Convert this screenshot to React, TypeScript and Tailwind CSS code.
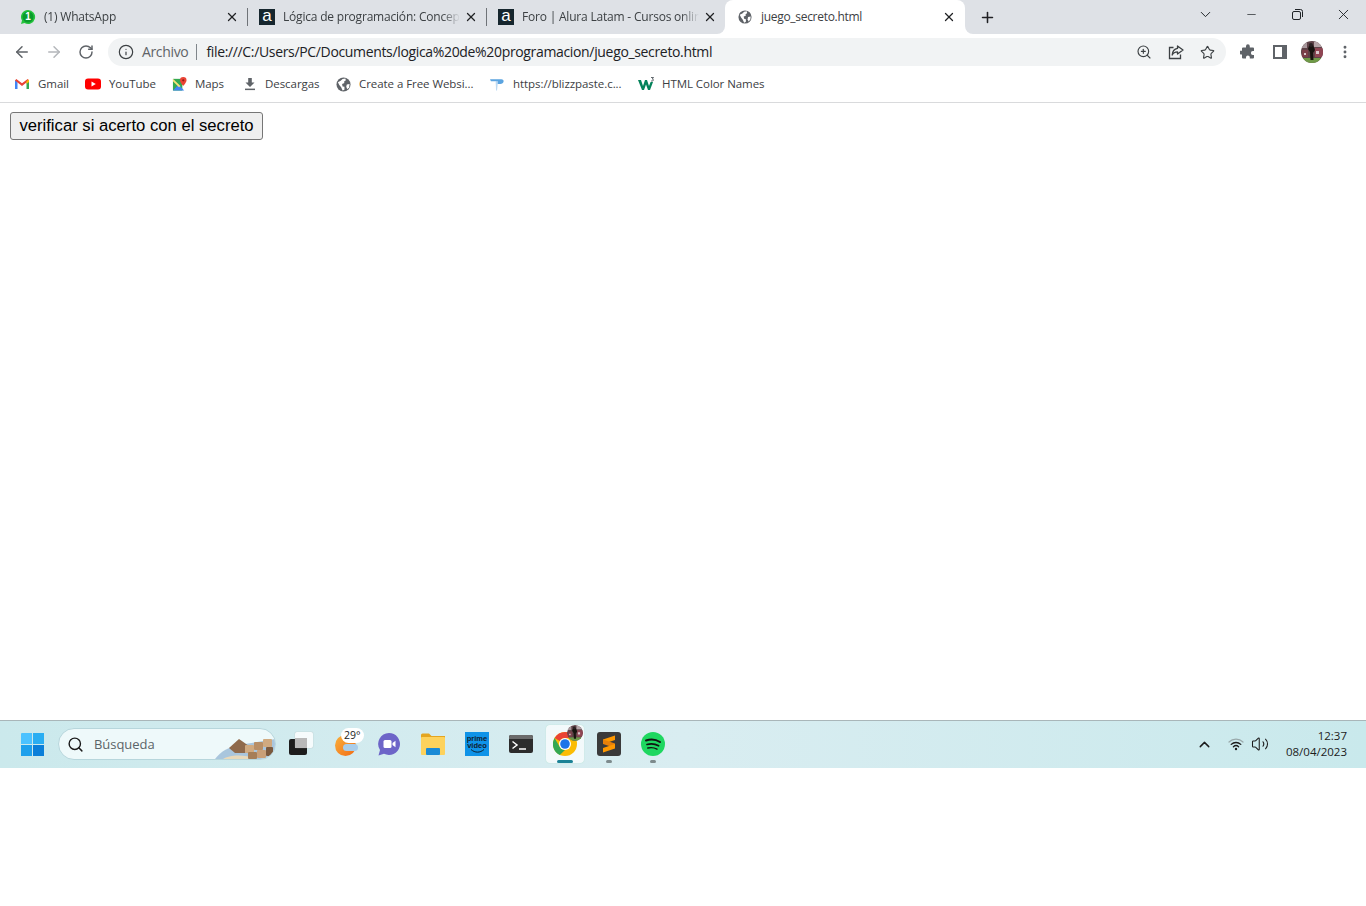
import React from "react";
import { ArrowLeft, ArrowRight, RotateCw, Info, ZoomIn, Star, Plus, X, ChevronDown, ChevronUp, Minus, Search, MoreVertical, Volume2 } from "lucide-react";

const uiFont = "font-['Open_Sans',sans-serif]";

const Globe = ({ size = 14 }: { size?: number }) => (
  <svg width={size} height={size} viewBox="0 0 16 16" className="shrink-0">
    <circle cx="8" cy="8" r="7.5" fill="#5f6368" />
    <path d="M2 5.5 L5 4 L7 2 L10 1.5 L10.5 3.5 L8.5 5 L9 6.5 L6.5 7.5 L7 10 L9 10.5 L9 13.5 L7 14.5 L5.5 11 L3.5 8.5 Z" fill="#fff" />
    <path d="M11.5 8 L14.5 7.5 L14 11 L12 13 L11 10.5 Z" fill="#fff" />
  </svg>
);

const AluraIcon = () => (
  <div className="w-4 h-4 shrink-0 bg-[#16262e] flex items-center justify-center">
    <span className="text-white text-[17px] leading-[16px] font-['Liberation_Sans',sans-serif] -mt-[2px]">a</span>
  </div>
);

const WhatsAppIcon = () => (
  <div className="relative w-4 h-4 shrink-0">
    <svg width="16" height="16" viewBox="0 0 16 16" className="absolute inset-0">
      <path d="M8 1a7 7 0 0 0-6 10.6L1 15l3.5-1A7 7 0 1 0 8 1z" fill="#25c33d" />
      <circle cx="8" cy="8" r="5.5" fill="#0a9c2c" />
    </svg>
    <span className="absolute inset-0 flex items-center justify-center text-white text-[10px] font-bold leading-none font-['Liberation_Sans',sans-serif]">1</span>
  </div>
);

const tabs = [
  { title: "(1) WhatsApp", icon: <WhatsAppIcon /> },
  { title: "Lógica de programación: Concep", icon: <AluraIcon /> },
  { title: "Foro | Alura Latam - Cursos onlin", icon: <AluraIcon /> },
];

const GmailIcon = () => (
  <svg width="16" height="16" viewBox="0 0 16 16" className="shrink-0">
    <path d="M1 13V4l2.5 1v8z" fill="#4285f4" />
    <path d="M15 13V4l-2.5 1v8z" fill="#34a853" />
    <path d="M1 4.5 L2.3 3 L8 7.3 L13.7 3 L15 4.5 L8 10z" fill="#ea4335" />
    <path d="M12.5 5 L15 3.6 V6 L12.5 8z" fill="#fbbc04" />
  </svg>
);

const YouTubeIcon = () => (
  <svg width="16" height="16" viewBox="0 0 16 16" className="shrink-0">
    <rect x="0" y="2.5" width="16" height="11" rx="3" fill="#f00" />
    <path d="M6.5 5.5 L10.8 8 L6.5 10.5z" fill="#fff" />
  </svg>
);

const MapsIcon = () => (
  <svg width="15" height="16" viewBox="0 0 16 16" className="shrink-0">
    <path d="M1 2.5 H11 V15 H1z" fill="#34a853" />
    <path d="M1 15 L7 8.5 L13 15z" fill="#4285f4" />
    <path d="M1 2.5 L9 10 L7.5 11.5 L1 5z" fill="#fbe27a" />
    <path d="M12 0.5a3.5 3.5 0 0 0-3.5 3.5c0 2.4 3.5 6 3.5 6s3.5-3.6 3.5-6A3.5 3.5 0 0 0 12 .5z" fill="#ea4335" />
    <circle cx="12" cy="4" r="1.2" fill="#8f1d16" />
  </svg>
);

const DownloadIcon = () => (
  <svg width="14" height="16" viewBox="0 0 14 16" className="shrink-0">
    <path d="M5.2 2 H8.8 V6.5 H11.5 L7 11 L2.5 6.5 H5.2z" fill="#5f6368" />
    <rect x="2" y="12.6" width="10" height="1.5" fill="#5f6368" />
  </svg>
);

const BlizzIcon = () => (
  <svg width="15" height="16" viewBox="0 0 16 16" className="shrink-0">
    <path d="M0 3 H12 C16 3 15 8 11 8 H8 L6.5 5 H1z" fill="#5ba4e0" />
    <path d="M6 5 L8.5 5 L7.5 15 L6.5 15z" fill="#bcd9f2" />
  </svg>
);

const W3Icon = () => (
  <div className="relative w-4 h-4 shrink-0">
    <svg width="16" height="16" viewBox="0 0 16 16">
      <path d="M0 4 H3 L5 10 L7 4 H9 L11 10 L12.6 6 H15 L12 14 H10 L8 8.5 L6 14 H4z" fill="#04825a" />
      <path d="M13 1.5 H15.5 L14.3 3 C15.8 3 15.8 5 14.3 5 H13" stroke="#1f2a30" strokeWidth="0.7" fill="none" />
    </svg>
  </div>
);

const bookmarks = [
  { label: "Gmail", icon: <GmailIcon />, w: "w-[31px]" },
  { label: "YouTube", icon: <YouTubeIcon />, w: "w-[47px]" },
  { label: "Maps", icon: <MapsIcon />, w: "w-[32px]" },
  { label: "Descargas", icon: <DownloadIcon />, w: "w-[55px]" },
  { label: "Create a Free Websi...", icon: <Globe size={15} />, w: "w-[115px]" },
  { label: "https://blizzpaste.c...", icon: <BlizzIcon />, w: "w-[109px]" },
  { label: "HTML Color Names", icon: <W3Icon />, w: "w-[104px]" },
];

const ProfilePic = ({ size = 22 }: { size?: number }) => (
  <svg width={size} height={size} viewBox="0 0 22 22">
    <defs>
      <clipPath id={`pc${size}`}>
        <circle cx="11" cy="11" r="11" />
      </clipPath>
    </defs>
    <g clipPath={`url(#pc${size})`}>
      <rect width="22" height="22" fill="#5e4248" />
      <rect x="0" y="2" width="6" height="5" fill="#a8989c" />
      <rect x="13" y="1" width="9" height="5" fill="#b5a5a8" />
      <rect x="1" y="9" width="6" height="7" fill="#7b3f4a" />
      <rect x="14" y="7" width="8" height="9" fill="#8f4553" />
      <rect x="15" y="10" width="3" height="3" fill="#d8c8cc" />
      <rect x="3" y="12" width="2" height="2" fill="#d8c8cc" />
      <rect x="0" y="17" width="22" height="5" fill="#6f9a48" />
      <path d="M8 5 L12 4 L14 9 L12 12 L12.5 19 L9.5 19 L9 11 L7 8z" fill="#17130f" />
      <circle cx="10" cy="4" r="2" fill="#2a2023" />
    </g>
  </svg>
);

const ShareIcon = () => (
  <svg width="16" height="16" viewBox="0 0 16 16" fill="none" stroke="#3c4043" strokeWidth="1.3">
    <path d="M5.5 3.5 H1.5 V14.5 H12.5 V10.5" />
    <path d="M9.5 2 L15 6 L9.5 10 V7.8 C7 7.8 5.2 8.8 4.2 11 C4.4 7.6 6.3 5 9.5 4.4z" strokeLinejoin="round" />
  </svg>
);

const PuzzleIcon = () => (
  <svg width="16" height="16" viewBox="0 0 16 16" fill="#5f6368">
    <path d="M6 2.2a1.9 1.9 0 0 1 3.8 0V3.5h3.2a1 1 0 0 1 1 1v2.6h-1.2a1.9 1.9 0 0 0 0 3.8H14v2.6a1 1 0 0 1-1 1H9.8v-1.2a1.9 1.9 0 0 0-3.8 0v1.2H3a1 1 0 0 1-1-1V10.5H.9a1.9 1.9 0 0 1 0-3.8H2V4.5a1 1 0 0 1 1-1h3z" />
  </svg>
);

const SidePanelIcon = () => (
  <div className="w-[14px] h-[14px] bg-[#5f6368] flex items-stretch p-[2px] pr-[5px] box-border">
    <div className="flex-1 bg-white" />
  </div>
);

const RestoreIcon = () => (
  <svg width="11" height="11" viewBox="0 0 11 11" fill="none" stroke="#1f2327" strokeWidth="1">
    <rect x="0.5" y="2.5" width="8" height="8" rx="1.5" />
    <path d="M3 0.5 H8.5 A2 2 0 0 1 10.5 2.5 V8" />
  </svg>
);

const WindowsLogo = () => (
  <div className="grid grid-cols-2 grid-rows-2 gap-[1px] w-[23px] h-[23px]">
    <div className="bg-[#4cc2ff] rounded-tl-[1px]" />
    <div className="bg-[#2aaef2]" />
    <div className="bg-[#1ea0ec]" />
    <div className="bg-[#0a7fd9]" />
  </div>
);

const SearchArt = () => (
  <svg width="60" height="32" viewBox="0 0 60 32" className="absolute right-0 top-0">
    <path d="M0 30 C6 22 14 18 24 16 L60 10 V30z" fill="#a9c6dd" />
    <path d="M8 30 C14 26 30 25 40 30z" fill="#e8d9ba" />
    <path d="M14 19 L24 10 L34 17 L30 24 L20 24z" fill="#8f6a4c" />
    <rect x="30" y="16" width="9" height="8" rx="1" fill="#d0aa80" />
    <rect x="39" y="13" width="9" height="8" rx="1" fill="#b88f66" />
    <rect x="48" y="10" width="9" height="8" rx="1" fill="#d0aa80" />
    <rect x="33" y="23" width="9" height="7" rx="1" fill="#a67e57" />
    <rect x="42" y="21" width="9" height="8" rx="1" fill="#c9a078" />
    <rect x="51" y="18" width="7" height="9" rx="1" fill="#7b5a3e" />
  </svg>
);

const TaskViewIcon = () => (
  <div className="relative w-[24px] h-[24px]">
    <div className="absolute left-0 bottom-[1px] w-[18px] h-[16px] bg-[#1d1d1d] rounded-[2px]" />
    <div className="absolute right-0 top-0 w-[18px] h-[16px] bg-white/80 rounded-[2px] shadow-[0_0_1px_#999]" />
    <div className="absolute left-[6px] top-[6px] w-[12px] h-[10px] bg-[#b9b9b9]" />
  </div>
);

const WeatherIcon = () => (
  <div className="relative w-[24px] h-[24px] left-[2px]">
    <div className="absolute left-0 top-[3px] w-[21px] h-[21px] rounded-full bg-gradient-to-br from-[#f9b13c] to-[#f06a12]" />
    <div className="absolute left-[8px] top-[12px] w-[15px] h-[7px] rounded-full bg-[#a9cdea]" />
    <div className="absolute left-[6px] -top-[4px] h-[15px] px-[3px] rounded-full bg-white flex items-center">
      <span className={`${uiFont} text-[10.5px] leading-none text-[#222]`}>29°</span>
    </div>
  </div>
);

const MeetIcon = () => (
  <svg width="24" height="24" viewBox="0 0 24 24">
    <path d="M12 1a11 11 0 1 1-5 20.8L1.5 23.5 3 18A11 11 0 0 1 12 1z" fill="#6d65c8" />
    <rect x="6.5" y="8" width="8" height="8" rx="1.5" fill="#fff" />
    <path d="M15.5 11 L18.5 8.8 V15.2 L15.5 13z" fill="#fff" />
  </svg>
);

const FolderIcon = () => (
  <svg width="24" height="22" viewBox="0 0 24 22">
    <path d="M0 2 a1.5 1.5 0 0 1 1.5-1.5 H8 L10.5 3 H24 V8 H0z" fill="#e4a520" />
    <rect x="0" y="4" width="24" height="18" rx="1" fill="#fdd25c" />
    <rect x="5" y="15" width="14" height="7" rx="1" fill="#1a8ad6" />
  </svg>
);

const PrimeIcon = () => (
  <div className="w-[24px] h-[24px] bg-[#0f93e8] flex flex-col items-center justify-center">
    <span className="font-['Liberation_Sans',sans-serif] font-bold text-[7.5px] leading-[7px] text-[#10202e]">prime</span>
    <span className="font-['Liberation_Sans',sans-serif] font-bold text-[7.5px] leading-[7px] text-[#10202e]">video</span>
    <svg width="15" height="4" viewBox="0 0 15 4">
      <path d="M1 0.5 C5 4 10 4 14 0.5" stroke="#10202e" strokeWidth="1" fill="none" />
    </svg>
  </div>
);

const TerminalIcon = () => (
  <div className="w-[24px] h-[18px] rounded-[2px] bg-[#2c2c2c] overflow-hidden relative">
    <div className="h-[4px] bg-[#6b6b6b]" />
    <svg width="24" height="14" viewBox="0 0 24 14" className="absolute left-0 top-[4px]">
      <path d="M3.5 2.5 L8 6 L3.5 9.5" stroke="#fff" strokeWidth="1.5" fill="none" />
      <path d="M10 10 H17" stroke="#fff" strokeWidth="1.5" />
    </svg>
  </div>
);

const ChromeIcon = () => (
  <svg width="24" height="24" viewBox="0 0 24 24">
    <circle cx="12" cy="12" r="12" fill="#fbbc04" />
    <path d="M12 0 A12 12 0 0 1 22.4 6 H12 A6 6 0 0 0 6.8 9 L1.6 6 A12 12 0 0 1 12 0z" fill="#ea4335" />
    <path d="M1.6 6 L6.8 15 A6 6 0 0 0 12 18 L6.8 23 A12 12 0 0 1 1.6 6z" fill="#34a853" />
    <circle cx="12" cy="12" r="6" fill="#fff" />
    <circle cx="12" cy="12" r="4.8" fill="#1a73e8" />
  </svg>
);

const SublimeIcon = () => (
  <div className="w-[24px] h-[24px] rounded-[3px] bg-[#3a3a3a] flex items-center justify-center">
    <svg width="14" height="18" viewBox="0 0 14 18">
      <path d="M13 0.5 V5 L1 9 V4.5z" fill="#ff9800" />
      <path d="M1 9 L13 13 V8.5 L1 4.5z" fill="#e8800a" />
      <path d="M13 9 V13.5 L1 17.5 V13z" fill="#ff9800" />
    </svg>
  </div>
);

const SpotifyIcon = () => (
  <svg width="24" height="24" viewBox="0 0 24 24">
    <circle cx="12" cy="12" r="12" fill="#1ed760" />
    <path d="M5 8.5 C10 7 15 7.5 19 10" stroke="#111" strokeWidth="2" fill="none" strokeLinecap="round" />
    <path d="M6 12.5 C10 11.4 14 11.8 17.6 13.8" stroke="#111" strokeWidth="1.7" fill="none" strokeLinecap="round" />
    <path d="M6.8 16 C10 15.3 13.3 15.6 16 17.2" stroke="#111" strokeWidth="1.4" fill="none" strokeLinecap="round" />
  </svg>
);

const WifiIcon = () => (
  <svg width="16" height="14" viewBox="0 0 16 14" fill="none" strokeLinecap="round">
    <path d="M1 5 A10 10 0 0 1 15 5" stroke="#9aa9ab" strokeWidth="1.2" />
    <path d="M3.2 7.4 A7 7 0 0 1 12.8 7.4" stroke="#1c1c1c" strokeWidth="1.3" />
    <path d="M5.4 9.7 A3.8 3.8 0 0 1 10.6 9.7" stroke="#1c1c1c" strokeWidth="1.3" />
    <circle cx="8" cy="12" r="1.2" fill="#1c1c1c" />
  </svg>
);

const TaskItem = ({
  children,
  active,
  running,
}: {
  children: React.ReactNode;
  active?: boolean;
  running?: boolean;
}) => (
  <div className={`relative w-[38px] h-[38px] mx-[3px] rounded-[4px] flex items-center justify-center ${active ? "bg-white/70 shadow-[0_0_1px_#9db]" : ""}`}>
    {children}
    {active && <div className="absolute bottom-[0px] left-[11px] w-[16px] h-[3px] rounded-full bg-[#1b8296]" />}
    {running && <div className="absolute bottom-[0px] left-[16px] w-[6px] h-[3px] rounded-full bg-[#7d8a8c]" />}
  </div>
);

const Tab = ({ title, icon, divider }: { title: string; icon: React.ReactNode; divider: boolean }) => (
  <div className="relative w-[239px] h-[34px] flex items-center pl-[11px] pr-[9px] shrink-0">
    {icon}
    <div className="ml-[8px] flex-1 min-w-0 whitespace-nowrap text-[12px] tracking-[-0.2px] text-[#3c4043] [mask-image:linear-gradient(to_right,black_90%,transparent)]">
      {title}
    </div>
    <X size={14} strokeWidth={2.2} className="ml-[4px] shrink-0 text-[#202124]" />
    {divider && <div className="absolute right-0 top-[8px] h-[18px] w-px bg-[#6f7378]" />}
  </div>
);

export default function App() {
  return (
    <div className={`${uiFont} min-h-[906px] bg-white flex flex-col`}>
      {/* barra de pestañas */}
      <div className="h-[34px] bg-[#dee1e6] flex items-stretch pl-[9px]">
        {tabs.map((t, i) => (
          <Tab key={t.title} title={t.title} icon={t.icon} divider={i < 2} />
        ))}
        <div className="relative w-[240px] h-[34px] -ml-[1px] bg-white rounded-t-[8px] flex items-center pl-[13px] pr-[9px] shrink-0">
          <Globe />
          <span className="ml-[9px] flex-1 text-[12px] tracking-[-0.3px] text-[#3c4043] whitespace-nowrap">juego_secreto.html</span>
          <X size={14} strokeWidth={2.2} className="text-[#202124]" />
          <div className="absolute -left-[8px] bottom-0 w-[8px] h-[8px] bg-white">
            <div className="w-full h-full bg-[#dee1e6] rounded-br-[8px]" />
          </div>
          <div className="absolute -right-[8px] bottom-0 w-[8px] h-[8px] bg-white">
            <div className="w-full h-full bg-[#dee1e6] rounded-bl-[8px]" />
          </div>
        </div>
        <div className="ml-[14px] h-[34px] flex items-center">
          <Plus size={17} strokeWidth={2.2} className="text-[#202124]" />
        </div>
        <div className="ml-auto flex items-start">
          <div className="w-[46px] h-[29px] flex items-center justify-center">
            <ChevronDown size={17} strokeWidth={1.4} className="text-[#1f2327]" />
          </div>
          <div className="w-[46px] h-[29px] flex items-center justify-center">
            <Minus size={13} strokeWidth={1.3} className="text-[#1f2327]" />
          </div>
          <div className="w-[46px] h-[29px] flex items-center justify-center">
            <RestoreIcon />
          </div>
          <div className="w-[46px] h-[29px] flex items-center justify-center">
            <X size={17} strokeWidth={1.3} className="text-[#1f2327]" />
          </div>
        </div>
      </div>

      {/* barra de direcciones */}
      <div className="h-[36px] flex items-center pl-[13px] pr-[13px]">
        <ArrowLeft size={18} strokeWidth={2} className="text-[#5f6368]" />
        <ArrowRight size={18} strokeWidth={2} className="ml-[14px] text-[#b4b7bb]" />
        <RotateCw size={16} strokeWidth={2.2} className="ml-[15px] text-[#5f6368]" />
        <div className="ml-[14px] w-[1118px] h-[28px] rounded-full bg-[#f1f3f4] flex items-center pl-[10px] pr-[11px]">
          <Info size={16} strokeWidth={1.8} className="text-[#3c4043]" />
          <span className="ml-[8px] pb-[2px] text-[14px] text-[#5f6368] tracking-[-0.35px]">Archivo</span>
          <div className="ml-[8px] w-px h-[16px] bg-[#80868b]" />
          <span className="ml-[9px] pb-[2px] text-[14px] text-[#202124] tracking-[-0.34px] whitespace-nowrap">
            file:///C:/Users/PC/Documents/logica%20de%20programacion/juego_secreto.html
          </span>
          <div className="ml-auto flex items-center gap-[16px]">
            <ZoomIn size={16} strokeWidth={1.7} className="text-[#3c4043]" />
            <ShareIcon />
            <Star size={15} strokeWidth={1.8} className="text-[#3c4043]" />
          </div>
        </div>
        <div className="ml-[14px]">
          <PuzzleIcon />
        </div>
        <div className="ml-[17px]">
          <SidePanelIcon />
        </div>
        <div className="ml-[14px]">
          <ProfilePic />
        </div>
        <MoreVertical size={16} strokeWidth={2.4} className="ml-[14px] text-[#5f6368]" />
      </div>

      {/* marcadores */}
      <div className="h-[33px] pb-[4px] border-b border-[#d9dadc] flex items-center pl-[14px] gap-[16px]">
        {bookmarks.map((b) => (
          <div key={b.label} className="flex items-center gap-[8px]">
            {b.icon}
            <span className={`${b.w} text-[11.5px] text-[#3c4043] whitespace-nowrap tracking-[-0.06px]`}>{b.label}</span>
          </div>
        ))}
      </div>

      {/* contenido de la página */}
      <main className="h-[617px] bg-white p-[10px] pt-[9px]">
        <button className="h-[28px] w-[253px] rounded-[3px] border border-[#767676] bg-[#efefef] text-[16.67px] leading-none text-black font-['Liberation_Sans',sans-serif] whitespace-nowrap">
          verificar si acerto con el secreto
        </button>
      </main>

      {/* barra de tareas */}
      <footer className="h-[48px] pb-[1px] border-t border-[#a9b6b9] bg-gradient-to-r from-[#cbe9ec] via-[#d9edf1] to-[#c9e9ec] flex items-center pl-[21px] pr-[19px]">
        <WindowsLogo />
        <div className="relative ml-[14px] w-[218px] h-[32px] rounded-full bg-[#eef9fa] border border-[#b7d6dc] overflow-hidden flex items-center pl-[8px]">
          <Search size={17} strokeWidth={2} className="text-[#1c1c1c]" />
          <span className="ml-[10px] pt-[1px] text-[13px] tracking-[-0.05px] text-[#5b6468]">Búsqueda</span>
          <SearchArt />
        </div>
        <div className="ml-[3px] flex items-center">
          <TaskItem><TaskViewIcon /></TaskItem>
          <TaskItem><WeatherIcon /></TaskItem>
          <TaskItem><MeetIcon /></TaskItem>
          <TaskItem><FolderIcon /></TaskItem>
          <TaskItem><PrimeIcon /></TaskItem>
          <TaskItem><TerminalIcon /></TaskItem>
          <TaskItem active>
            <ChromeIcon />
            <div className="absolute right-[1px] top-0 rounded-full overflow-hidden">
              <ProfilePic size={16} />
            </div>
          </TaskItem>
          <TaskItem running><SublimeIcon /></TaskItem>
          <TaskItem running><SpotifyIcon /></TaskItem>
        </div>
        <div className="ml-auto flex items-center">
          <ChevronUp size={17} strokeWidth={2} className="text-[#1c1c1c]" />
          <div className="ml-[15px]"><WifiIcon /></div>
          <Volume2 size={18} strokeWidth={1.4} className="ml-[7px] text-[#1c1c1c]" />
          <div className="ml-[14px] w-[64px] text-right text-[#1c1c1c] text-[11.5px] leading-[16px]">
            <div>12:37</div>
            <div>08/04/2023</div>
          </div>
        </div>
      </footer>

      <div className="flex-1 bg-white" />
    </div>
  );
}
